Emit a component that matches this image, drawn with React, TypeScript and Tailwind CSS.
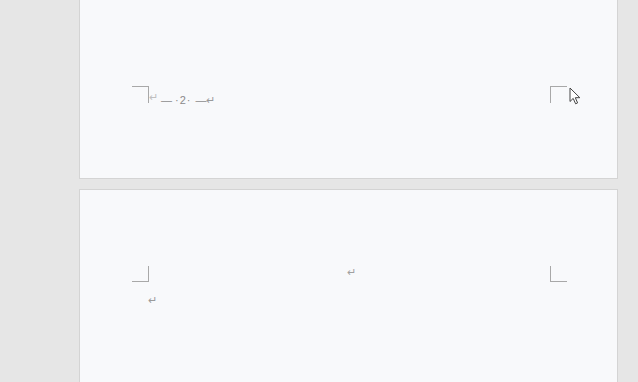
function Ret({ className = "" }: { className?: string }) {
    return <span className={"text-[11px] leading-none text-[#9a9a9a] " + className}>↵</span>;
}

function Cursor() {
    return (
        <svg
            className="absolute left-[489px] top-[87px]"
            width="13"
            height="18"
            viewBox="0 0 13 18"
        >
            <path
                d="M1 1 L1 14.5 L4.2 11.4 L6.6 16.8 L8.6 15.9 L6.3 10.7 L10.8 10.7 Z"
                fill="#fff"
                stroke="#444"
                strokeWidth="1"
                strokeLinejoin="round"
            />
        </svg>
    );
}

export default function App() {
    return (
        <div className="h-[382px] w-[638px] overflow-hidden bg-[#e6e6e6] font-['Liberation_Sans',sans-serif]">
            <div className="ml-[79px] flex w-[539px] flex-col gap-[10px]">
                {/* Page 1 (bottom part) */}
                <div className="relative h-[179px] border-x border-b border-[#d4d4d4] bg-[#f8f9fb]">
                    <div className="flex items-start pl-[52px] pt-[86px]">
                        <div className="h-[17px] w-[17px] border-r border-t border-[#a8a8a8]" />
                        <Ret className="mt-[6px] text-[#c0c0c0]" />
                        <div className="ml-[3px] mt-[9px] flex items-center text-[11px] leading-none text-[#8a8a8a]">
                            <span className="tracking-[-1px]">—</span>
                            <span className="mx-[4px] tracking-[1px]">·2·</span>
                            <span className="tracking-[-1px]">—</span>
                            <Ret className="ml-[1px] text-[#8a8a8a]" />
                        </div>
                        <div className="ml-auto mr-[50px] h-[17px] w-[17px] border-l border-t border-[#a8a8a8]" />
                    </div>
                    <Cursor />
                </div>
                {/* Page 2 */}
                <div className="h-[200px] border-x border-t border-[#d4d4d4] bg-[#f8f9fb]">
                    <div className="flex items-end pl-[52px] pt-[76px]">
                        <div className="h-[16px] w-[17px] border-b border-r border-[#a8a8a8]" />
                        <div className="flex flex-1 justify-center self-start pl-[4px] pt-[1px]">
                            <Ret className="text-[#a0a0a0] text-[9px]" />
                        </div>
                        <div className="mr-[50px] h-[16px] w-[17px] border-b border-l border-[#a8a8a8]" />
                    </div>
                    <div className="pl-[68px] pt-[5px]">
                        <Ret className="text-[#9a9a9a]" />
                    </div>
                </div>
            </div>
        </div>
    );
}
